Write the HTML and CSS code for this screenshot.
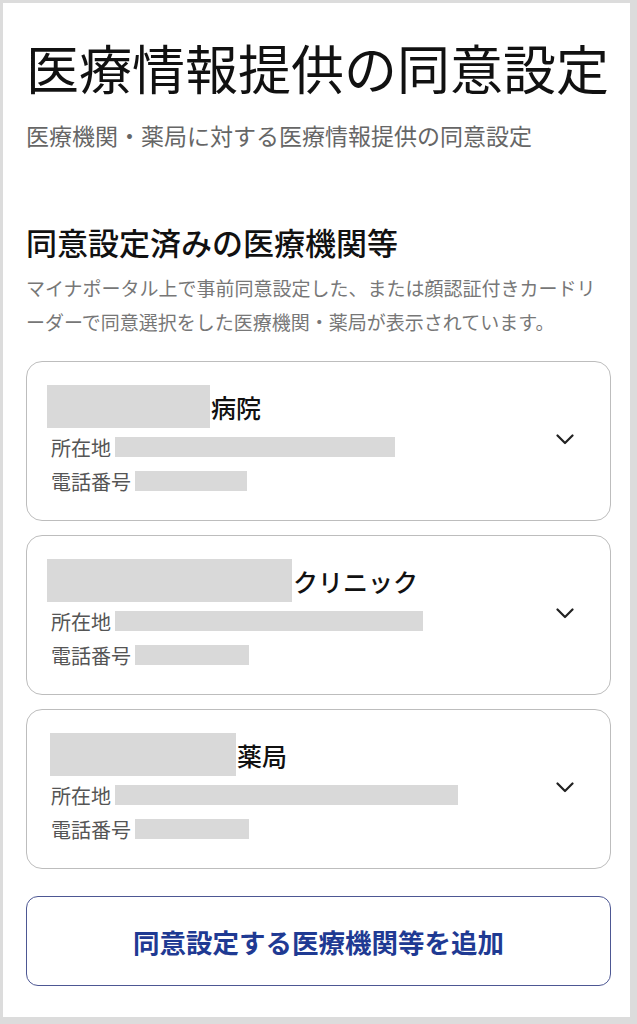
FILE: index.html
```html
<!DOCTYPE html>
<html lang="ja">
<head>
    <meta charset="utf-8">
    <title>医療情報提供の同意設定</title>
    <link rel="stylesheet" href="styles.css">
</head>
<body>
    <div class="page">
        <h1 class="title">医療情報提供の同意設定</h1>
        <p class="lead">医療機関・薬局に対する医療情報提供の同意設定</p>

        <h2 class="section">同意設定済みの医療機関等</h2>
        <p class="note">マイナポータル上で事前同意設定した、または顔認証付きカードリーダーで同意選択をした医療機関・薬局が表示されています。</p>

        <div class="list">
            <div class="card">
                <div class="card-body">
                    <div class="name"><span class="mask mask-name" style="width:163px"></span>病院</div>
                    <div class="info"><span class="label">所在地</span><span class="mask mask-line" style="width:280px"></span></div>
                    <div class="info"><span class="label">電話番号</span><span class="mask mask-line" style="width:112px"></span></div>
                </div>
                <svg class="chevron" width="18" height="11" viewBox="0 0 18 11"><path d="M1.5 1.5 L9 9 L16.5 1.5" fill="none" stroke="#222" stroke-width="2.2" stroke-linecap="round" stroke-linejoin="round"/></svg>
            </div>
            <div class="card">
                <div class="card-body">
                    <div class="name"><span class="mask mask-name" style="width:245px"></span>クリニック</div>
                    <div class="info"><span class="label">所在地</span><span class="mask mask-line" style="width:308px"></span></div>
                    <div class="info"><span class="label">電話番号</span><span class="mask mask-line" style="width:114px"></span></div>
                </div>
                <svg class="chevron" width="18" height="11" viewBox="0 0 18 11"><path d="M1.5 1.5 L9 9 L16.5 1.5" fill="none" stroke="#222" stroke-width="2.2" stroke-linecap="round" stroke-linejoin="round"/></svg>
            </div>
            <div class="card">
                <div class="card-body">
                    <div class="name name-shift"><span class="mask mask-name" style="width:186px"></span>薬局</div>
                    <div class="info"><span class="label">所在地</span><span class="mask mask-line" style="width:343px"></span></div>
                    <div class="info"><span class="label">電話番号</span><span class="mask mask-line" style="width:114px"></span></div>
                </div>
                <svg class="chevron" width="18" height="11" viewBox="0 0 18 11"><path d="M1.5 1.5 L9 9 L16.5 1.5" fill="none" stroke="#222" stroke-width="2.2" stroke-linecap="round" stroke-linejoin="round"/></svg>
            </div>
        </div>

        <button type="button" class="add">同意設定する医療機関等を追加</button>
    </div>
</body>
</html>
```

FILE: styles.css
```css
body{
    margin: 0;
    background: #dcdcdc;
    font-family: "Noto Sans CJK JP", "Noto Sans", sans-serif;
    color: #1a1a1a;
}
.page{
    margin: 3px 7px 7px 3px;
    height: 1014px;
    box-sizing: border-box;
    background: #fff;
    padding: 29px 19px 0 23px;
}
.title{
    margin: 0;
    font-size: 53px;
    line-height: 70px;
    font-weight: normal;
    color: #111;
}
.lead{
    margin: 16px 0 0;
    font-size: 23px;
    line-height: 34px;
    color: #666;
}
.section{
    margin: 69px 0 0;
    font-size: 31px;
    line-height: 42px;
    font-weight: 500;
    color: #111;
}
.note{
    margin: 8px 0 0;
    font-size: 19px;
    line-height: 34px;
    color: #777;
}

.list{
    margin-top: 22px;
    display: flex;
    flex-direction: column;
    gap: 14px;
}
.card{
    height: 160px;
    box-sizing: border-box;
    border: 1px solid #bdbdbd;
    border-radius: 16px;
    padding: 0 36px 0 20px;
    display: flex;
    align-items: center;
}
.card-body{
    flex: 1;
    align-self: flex-start;
    padding-top: 23px;
}
.chevron{
    display: block;
    margin-top: -3px;
}
.name{
    display: flex;
    align-items: center;
    height: 43px;
    font-size: 25px;
    font-weight: 500;
    color: #111;
}
.name .mask{
    margin-right: 1px;
}
.name-shift{
    padding-left: 3px;
}
.mask{
    display: inline-block;
    background: #d9d9d9;
}
.mask-name{
    height: 43px;
}
.mask-line{
    height: 20px;
}
.info{
    display: flex;
    align-items: center;
    height: 30px;
    margin-top: 4px;
    padding-left: 4px;
    font-size: 20px;
    color: #555;
}
.info .label{
    margin-right: 4px;
}

.add{
    display: block;
    width: 100%;
    height: 90px;
    margin-top: 27px;
    background: #fff;
    border: 1.5px solid #4d5793;
    border-radius: 12px;
    font-family: "Noto Sans CJK JP", "Noto Sans", sans-serif;
    font-size: 26.5px;
    font-weight: bold;
    color: #1f3a93;
}
```
